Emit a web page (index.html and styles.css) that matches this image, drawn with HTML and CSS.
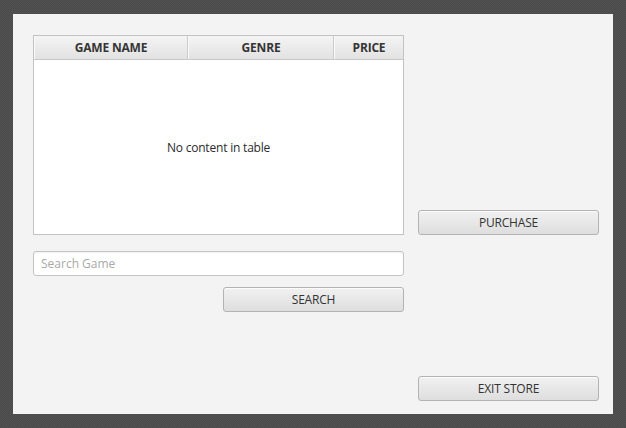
FILE: index.html
```html
<!DOCTYPE html>
<html>
<head>
<meta charset="utf-8">
<link rel="stylesheet" href="styles.css">
</head>
<body>
<div class="window">
  <div class="left">
    <div class="table">
      <div class="thead">
        <div class="th c1">GAME NAME</div>
        <div class="th c2">GENRE</div>
        <div class="th c3">PRICE</div>
      </div>
      <div class="tbody">No content in table</div>
    </div>
    <input class="search" type="text" placeholder="Search Game">
    <div class="search-row">
      <button class="btn btn-search">SEARCH</button>
    </div>
  </div>
  <div class="right">
    <button class="btn btn-purchase">PURCHASE</button>
    <button class="btn btn-exit">EXIT STORE</button>
  </div>
</div>
</body>
</html>
```
FILE: styles.css
```css
html, body {
  margin: 0;
  padding: 0;
}
body {
  width: 626px;
  height: 428px;
  background-color: #535353;
  background-image:
    linear-gradient(45deg, #494949 25%, transparent 25%, transparent 75%, #494949 75%),
    linear-gradient(45deg, #494949 25%, transparent 25%, transparent 75%, #494949 75%);
  background-size: 2px 2px;
  background-position: 0 0, 1px 1px;
  font-family: "Open Sans", "Noto Sans", "Liberation Sans", sans-serif;
  font-size: 12px;
  color: #333;
  padding-top: 14px;
  padding-left: 13px;
  box-sizing: border-box;
}
.window {
  width: 600px;
  height: 400px;
  background: #f3f3f3;
  box-sizing: border-box;
  padding: 21px 14px 13px 20px;
  display: flex;
  gap: 14px;
}
.left {
  width: 371px;
  display: flex;
  flex-direction: column;
}
.table {
  height: 200px;
  box-sizing: border-box;
  border: 1px solid #c2c2c2;
  background: #fff;
  display: flex;
  flex-direction: column;
}
.thead {
  display: flex;
  height: 24px;
  box-sizing: border-box;
  border-bottom: 1px solid #c8c8c8;
}
.th {
  box-sizing: border-box;
  background: linear-gradient(#f4f4f4, #e2e2e2);
  border-right: 1px solid #cbcbcb;
  border-left: 1px solid #fafafa;
  display: flex;
  align-items: center;
  justify-content: center;
  font-weight: bold;
  font-size: 12px;
  color: #353535;
  letter-spacing: -0.2px;
}
.c1 { width: 154px; }
.c2 { width: 146px; }
.c3 { flex: 1; border-right: none; }
.tbody {
  flex: 1;
  display: flex;
  align-items: center;
  justify-content: center;
  font-size: 12px;
  color: #2b2b2b;
  letter-spacing: -0.2px;
  padding-top: 1px;
}
.search {
  margin: 16px 0 0 0;
  height: 25px;
  width: 371px;
  box-sizing: border-box;
  border: 1px solid #c4c4c4;
  border-radius: 3px;
  background: #fff;
  padding: 0 7px;
  font-family: inherit;
  font-size: 12px;
  color: #333;
  box-shadow: inset 0 1px 2px rgba(0,0,0,0.06);
  outline: none;
}
.search::placeholder {
  color: #a9a9a9;
}
.search-row {
  display: flex;
  justify-content: flex-end;
  margin-top: 11px;
}
.btn {
  width: 181px;
  height: 25px;
  box-sizing: border-box;
  border: 1px solid #b3b3b3;
  border-radius: 3px;
  background: linear-gradient(#f1f1f1, #dedede);
  box-shadow: inset 0 1px 0 #fbfbfb;
  font-family: inherit;
  font-size: 12px;
  color: #333;
  padding: 0;
  letter-spacing: -0.2px;
  display: flex;
  align-items: center;
  justify-content: center;
}
.right {
  width: 181px;
  display: flex;
  flex-direction: column;
}
.btn-purchase {
  margin-top: 175px;
}
.btn-exit {
  margin-top: auto;
}
```
